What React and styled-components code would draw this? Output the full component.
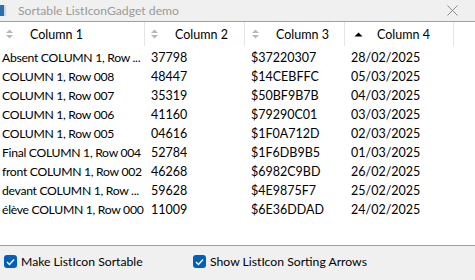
import styled, { createGlobalStyle } from "styled-components";

const GlobalStyle = createGlobalStyle`
    html, body {
        margin: 0;
        padding: 0;
        background: #fff;
    }
    body {
        font-family: Lato, "Noto Sans", sans-serif;
        font-size: 12px;
    }
`;

const Window = styled.div`
    width: 475px;
    height: 280px;
    display: flex;
    flex-direction: column;
    overflow: hidden;
`;

const TitleBar = styled.div`
    height: 22px;
    display: flex;
    align-items: center;
    background: #f0f0f0;
    border-bottom: 1px solid #a0a0a0;
    box-sizing: border-box;
    color: #9a9a9a;
    font-size: 12.2px;
`;

const AppIcon = styled.span`
    width: 6px;
    height: 11px;
    margin-right: 12px;
    background: linear-gradient(90deg, #2d6fa8 0 4px, #c9d8e6 4px);
`;

const Title = styled.span`
    flex: 1;
`;

const CloseButton = styled.span`
    width: 46px;
    display: flex;
    justify-content: center;
`;

const List = styled.div`
    flex: 1;
    background: #fff;
    border-bottom: 1px solid #a0a0a0;
`;

const Grid = styled.div`
    display: grid;
    grid-template-columns: 145px 100px 100px 109px;
    padding-top: ${(p) => p.$top || 0}px;
`;

const HeaderCell = styled.div`
    height: 24px;
    display: flex;
    align-items: center;
    padding-left: ${(p) => p.$pad}px;
    border-right: 1px solid #e5e5e5;
    color: #000;
    box-sizing: border-box;
    font-size: 12.5px;

    span {
        margin-left: ${(p) => p.$gap}px;
    }
`;

const Cell = styled.div`
    height: 19px;
    line-height: 19px;
    padding-left: ${(p) => (p.$first ? 2 : 6)}px;
    white-space: nowrap;
    overflow: hidden;
    color: #000;
    font-size: ${(p) => (p.$first ? 12.2 : 12.5)}px;
    letter-spacing: ${(p) => (p.$first ? -0.3 : 0)}px;
`;

const Footer = styled.div`
    height: 34px;
    background: #f0f0f0;
    display: flex;
    align-items: flex-start;
    padding: 8px 0 0 4px;
    box-sizing: border-box;
`;

const CheckLabel = styled.label`
    display: flex;
    align-items: center;
    gap: 4px;
    width: ${(p) => p.$width}px;
    color: #000;
    font-size: 12.2px;
`;

const Box = styled.span`
    width: 13px;
    height: 13px;
    border-radius: 3px;
    background: #005fb8;
    display: flex;
    align-items: center;
    justify-content: center;
`;

function SortIcon({ active }) {
    if (active) {
        return (
            <svg width="9" height="9" viewBox="0 0 9 9">
                <path d="M0.5 6.5 L4.5 2.5 L8.5 6.5 Z" fill="#000" />
            </svg>
        );
    }
    return (
        <svg width="9" height="12" viewBox="0 0 9 12">
            <path d="M1 5 L4.5 1.5 L8 5 Z" fill="#b8b8b8" />
            <path d="M1 7 L4.5 10.5 L8 7 Z" fill="#b8b8b8" />
        </svg>
    );
}

function Check() {
    return (
        <Box>
            <svg width="9" height="8" viewBox="0 0 9 8">
                <path d="M1 4 L3.5 6.5 L8 1.5" stroke="#fff" strokeWidth="1.4" fill="none" />
            </svg>
        </Box>
    );
}

const rows = [
    ["Absent COLUMN 1, Row ...", "37798", "$37220307", "28/02/2025"],
    ["COLUMN 1, Row 008", "48447", "$14CEBFFC", "05/03/2025"],
    ["COLUMN 1, Row 007", "35319", "$50BF9B7B", "04/03/2025"],
    ["COLUMN 1, Row 006", "41160", "$79290C01", "03/03/2025"],
    ["COLUMN 1, Row 005", "04616", "$1F0A712D", "02/03/2025"],
    ["Final COLUMN 1, Row 004", "52784", "$1F6DB9B5", "01/03/2025"],
    ["front COLUMN 1, Row 002", "46268", "$6982C9BD", "26/02/2025"],
    ["devant COLUMN 1, Row ...", "59628", "$4E9875F7", "25/02/2025"],
    ["élève COLUMN 1, Row 000", "11009", "$6E36DDAD", "24/02/2025"],
];

const headers = [
    { label: "Column 1", pad: 5, gap: 16 },
    { label: "Column 2", pad: 5, gap: 16 },
    { label: "Column 3", pad: 6, gap: 16 },
    { label: "Column 4", pad: 9, gap: 14, active: true },
];

export default function App() {
    return (
        <>
            <GlobalStyle />
            <Window>
                <TitleBar>
                    <AppIcon />
                    <Title>Sortable ListIconGadget demo</Title>
                    <CloseButton>
                        <svg width="11" height="11" viewBox="0 0 11 11">
                            <path d="M0.5 0.5 L10.5 10.5 M10.5 0.5 L0.5 10.5" stroke="#8a8a8a" strokeWidth="1" />
                        </svg>
                    </CloseButton>
                </TitleBar>
                <List>
                    <Grid>
                        {headers.map((h) => (
                            <HeaderCell key={h.label} $pad={h.pad} $gap={h.gap}>
                                <SortIcon active={h.active} />
                                <span>{h.label}</span>
                            </HeaderCell>
                        ))}
                    </Grid>
                    <Grid $top={2}>
                        {rows.map((r) =>
                            r.map((v, i) => (
                                <Cell key={r[0] + i} $first={i === 0}>
                                    {v}
                                </Cell>
                            ))
                        )}
                    </Grid>
                </List>
                <Footer>
                    <CheckLabel $width={189}>
                        <Check />
                        Make ListIcon Sortable
                    </CheckLabel>
                    <CheckLabel $width={260}>
                        <Check />
                        Show ListIcon Sorting Arrows
                    </CheckLabel>
                </Footer>
            </Window>
        </>
    );
}
